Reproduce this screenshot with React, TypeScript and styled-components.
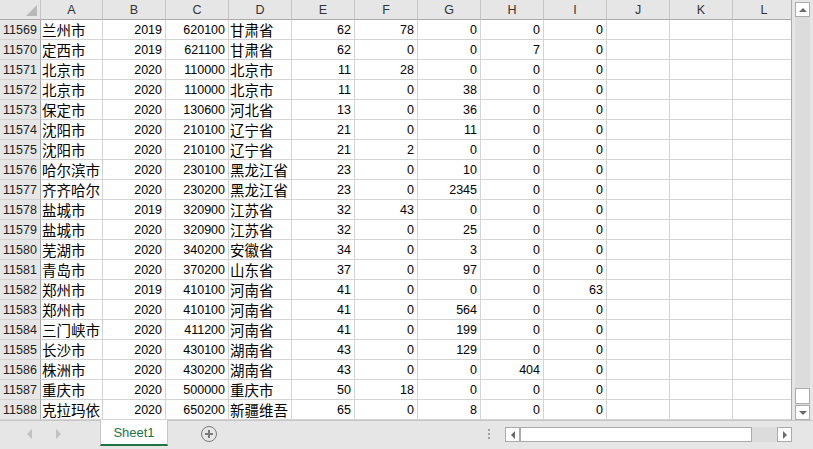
import { Fragment } from "react"
import styled, { createGlobalStyle } from "styled-components"

const GlobalStyle = createGlobalStyle`
  html, body { margin: 0; padding: 0; background: #e6e6e6; }
  * { box-sizing: border-box; }
`

type Row = [number, string, number, number, string, number, number, number, number, number]

const rows: Row[] = [
  [11569, "兰州市", 2019, 620100, "甘肃省", 62, 78, 0, 0, 0],
  [11570, "定西市", 2019, 621100, "甘肃省", 62, 0, 0, 7, 0],
  [11571, "北京市", 2020, 110000, "北京市", 11, 28, 0, 0, 0],
  [11572, "北京市", 2020, 110000, "北京市", 11, 0, 38, 0, 0],
  [11573, "保定市", 2020, 130600, "河北省", 13, 0, 36, 0, 0],
  [11574, "沈阳市", 2020, 210100, "辽宁省", 21, 0, 11, 0, 0],
  [11575, "沈阳市", 2020, 210100, "辽宁省", 21, 2, 0, 0, 0],
  [11576, "哈尔滨市", 2020, 230100, "黑龙江省", 23, 0, 10, 0, 0],
  [11577, "齐齐哈尔", 2020, 230200, "黑龙江省", 23, 0, 2345, 0, 0],
  [11578, "盐城市", 2019, 320900, "江苏省", 32, 43, 0, 0, 0],
  [11579, "盐城市", 2020, 320900, "江苏省", 32, 0, 25, 0, 0],
  [11580, "芜湖市", 2020, 340200, "安徽省", 34, 0, 3, 0, 0],
  [11581, "青岛市", 2020, 370200, "山东省", 37, 0, 97, 0, 0],
  [11582, "郑州市", 2019, 410100, "河南省", 41, 0, 0, 0, 63],
  [11583, "郑州市", 2020, 410100, "河南省", 41, 0, 564, 0, 0],
  [11584, "三门峡市", 2020, 411200, "河南省", 41, 0, 199, 0, 0],
  [11585, "长沙市", 2020, 430100, "湖南省", 43, 0, 129, 0, 0],
  [11586, "株洲市", 2020, 430200, "湖南省", 43, 0, 0, 404, 0],
  [11587, "重庆市", 2020, 500000, "重庆市", 50, 18, 0, 0, 0],
  [11588, "克拉玛依", 2020, 650200, "新疆维吾", 65, 0, 8, 0, 0],
]

const letters = ["A", "B", "C", "D", "E", "F", "G", "H", "I", "J", "K", "L"]

const Window = styled.div`
  width: 813px;
  height: 449px;
  display: flex;
  flex-direction: column;
  background: #e6e6e6;
  font-family: "Liberation Sans", "Noto Sans CJK SC", sans-serif;
  overflow: hidden;
`

const Main = styled.div`
  display: flex;
  height: 421px;
  border-bottom: 1px solid #c6c6c6;
`

const SheetArea = styled.div`
  width: 792px;
  height: 420px;
  overflow: hidden;
  border-right: 1px solid #ababab;
  background: #fff;
`

const Grid = styled.div`
  display: grid;
  grid-template-columns: 41px 62px repeat(11, 63px);
  grid-auto-rows: 20px;
  width: 804px;
`

const Corner = styled.div`
  position: relative;
  background: #e6e6e6;
  border-right: 1px solid #c6c6c6;
  border-bottom: 1px solid #ababab;

  &::after {
    content: "";
    position: absolute;
    right: 3px;
    bottom: 3px;
    border-style: solid;
    border-width: 0 0 11px 11px;
    border-color: transparent transparent #b9b9b9 transparent;
  }
`

const ColHead = styled.div`
  background: #e6e6e6;
  border-right: 1px solid #c6c6c6;
  border-bottom: 1px solid #ababab;
  display: flex;
  align-items: center;
  justify-content: center;
  font-size: 12.5px;
  color: #333;
  padding-top: 1px;
`

const RowHead = styled.div`
  background: #e6e6e6;
  border-right: 1px solid #ababab;
  border-bottom: 1px solid #d4d4d4;
  display: flex;
  align-items: center;
  justify-content: center;
  font-size: 12.5px;
  color: #222;
  padding-top: 1px;
`

const Cell = styled.div<{ $align?: "left" | "right"; $cjk?: boolean }>`
  border-right: 1px solid #d4d4d4;
  border-bottom: 1px solid #d4d4d4;
  display: flex;
  align-items: center;
  justify-content: ${({ $align }) => ($align === "left" ? "flex-start" : "flex-end")};
  padding: ${({ $cjk }) => ($cjk ? "0 0 0 1px" : "1px 3px 0 0")};
  font-family: ${({ $cjk }) =>
    $cjk ? `"Noto Sans CJK SC", sans-serif` : `"Liberation Sans", sans-serif`};
  font-size: ${({ $cjk }) => ($cjk ? "14.5px" : "12.5px")};
  line-height: 19px;
  color: #000;
  white-space: nowrap;
  overflow: hidden;
`

const VScroll = styled.div`
  width: 21px;
  height: 420px;
  padding: 2px 3px 0;
  display: flex;
  flex-direction: column;
`

const Track = styled.div`
  flex: 1;
  background: #dcdcdc;
  display: flex;
  flex-direction: column;
  justify-content: flex-end;
  padding-bottom: 1px;
`

const Thumb = styled.div<{ $dir: "v" | "h" }>`
  background: #fff;
  border: 1px solid #ababab;
  ${({ $dir }) => ($dir === "v" ? "height: 16px;" : "width: 232px; height: 100%;")}
`

const ArrowButton = styled.div<{ $dir: "up" | "down" | "left" | "right" }>`
  width: 15px;
  height: ${({ $dir }) => ($dir === "up" || $dir === "down" ? "15px" : "100%")};
  background: #fff;
  border: 1px solid #ababab;
  display: flex;
  align-items: center;
  justify-content: center;
  flex-shrink: 0;

  &::before {
    content: "";
    border-style: solid;
    ${({ $dir }) =>
      $dir === "up"
        ? "border-width: 0 4px 4px 4px; border-color: transparent transparent #6a6a6a transparent;"
        : $dir === "down"
        ? "border-width: 4px 4px 0 4px; border-color: #6a6a6a transparent transparent transparent;"
        : $dir === "left"
        ? "border-width: 4px 4px 4px 0; border-color: transparent #6a6a6a transparent transparent;"
        : "border-width: 4px 0 4px 4px; border-color: transparent transparent transparent #6a6a6a;"}
  }
`

const TabBar = styled.div`
  height: 27px;
  display: flex;
  align-items: flex-start;
`

const Nav = styled.div`
  width: 100px;
  height: 26px;
  display: flex;
  align-items: center;
  padding-left: 27px;
  gap: 24px;
`

const NavArrow = styled.span<{ $dir: "left" | "right" }>`
  width: 0;
  height: 0;
  border-style: solid;
  ${({ $dir }) =>
    $dir === "left"
      ? "border-width: 5px 5px 5px 0; border-color: transparent #c0c0c0 transparent transparent;"
      : "border-width: 5px 0 5px 5px; border-color: transparent transparent transparent #c0c0c0;"}
`

const SheetTab = styled.div`
  width: 68px;
  height: 26px;
  background: #fff;
  border-left: 1px solid #c6c6c6;
  border-right: 1px solid #c6c6c6;
  border-bottom: 2px solid #217346;
  margin-top: -1px;
  display: flex;
  align-items: center;
  justify-content: center;
  font-size: 13px;
  color: #217346;
`

const AddSheet = styled.div`
  width: 16px;
  height: 16px;
  margin: 5px 0 0 33px;
  border: 1.5px solid #7a7a7a;
  border-radius: 50%;
  position: relative;

  &::before,
  &::after {
    content: "";
    position: absolute;
    background: #7a7a7a;
    left: 50%;
    top: 50%;
    transform: translate(-50%, -50%);
  }
  &::before { width: 8px; height: 2px; }
  &::after { width: 2px; height: 8px; }
`

const Spacer = styled.div`
  flex: 1;
`

const Dots = styled.div`
  width: 2px;
  margin: 8px 15px 0 0;
  display: flex;
  flex-direction: column;
  gap: 2px;

  span {
    width: 2px;
    height: 2px;
    background: #a0a0a0;
  }
`

const HScroll = styled.div`
  width: 287px;
  height: 15px;
  margin: 6px 21px 0 0;
  display: flex;
`

const HTrack = styled.div`
  flex: 1;
  background: #dcdcdc;
  display: flex;
  height: 15px;
`

const numberCols = (r: Row) => [r[5], r[6], r[7], r[8], r[9]]

export default function App() {
  return (
    <>
      <GlobalStyle />
      <Window>
        <Main>
          <SheetArea>
            <Grid>
              <Corner />
              {letters.map((l) => (
                <ColHead key={l}>{l}</ColHead>
              ))}
              {rows.map((r) => (
                <Fragment key={r[0]}>
                  <RowHead>{r[0]}</RowHead>
                  <Cell $align="left" $cjk>{r[1]}</Cell>
                  <Cell>{r[2]}</Cell>
                  <Cell>{r[3]}</Cell>
                  <Cell $align="left" $cjk>{r[4]}</Cell>
                  {numberCols(r).map((v, i) => (
                    <Cell key={i}>{v}</Cell>
                  ))}
                  <Cell />
                  <Cell />
                  <Cell />
                </Fragment>
              ))}
            </Grid>
          </SheetArea>
          <VScroll>
            <ArrowButton $dir="up" />
            <Track>
              <Thumb $dir="v" />
            </Track>
            <ArrowButton $dir="down" />
          </VScroll>
        </Main>
        <TabBar>
          <Nav>
            <NavArrow $dir="left" />
            <NavArrow $dir="right" />
          </Nav>
          <SheetTab>Sheet1</SheetTab>
          <AddSheet />
          <Spacer />
          <Dots>
            <span />
            <span />
            <span />
          </Dots>
          <HScroll>
            <ArrowButton $dir="left" />
            <HTrack>
              <Thumb $dir="h" />
            </HTrack>
            <ArrowButton $dir="right" />
          </HScroll>
        </TabBar>
      </Window>
    </>
  )
}
